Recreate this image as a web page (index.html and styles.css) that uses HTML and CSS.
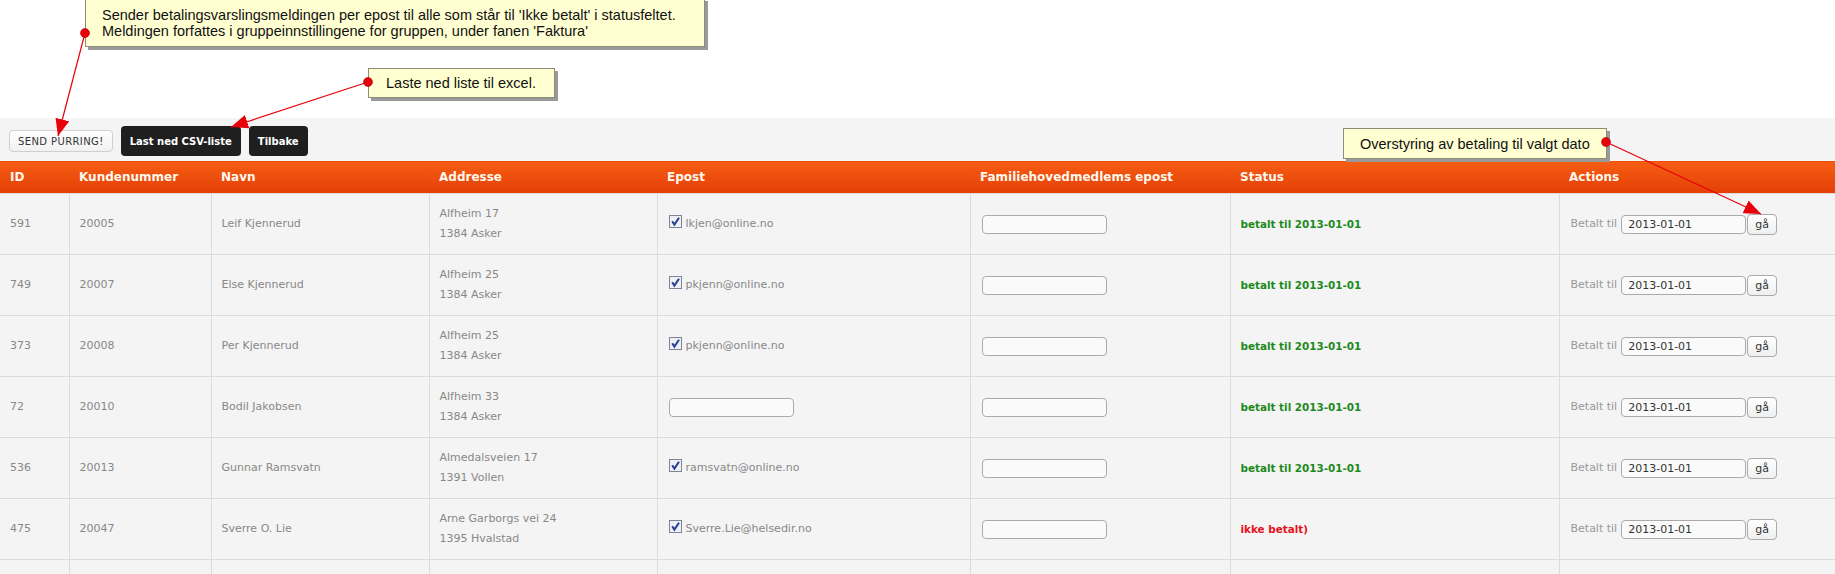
FILE: index.html
```html
<!DOCTYPE html>
<html lang="no">
<head>
    <meta charset="UTF-8">
    <title>Medlemmer - betaling</title>
    <link rel="stylesheet" href="styles.css">
</head>
<body>
    <div class="page">
        <div class="intro"></div>

        <div class="main">
            <div class="toolbar">
                <button class="btn-light">SEND PURRING!</button>
                <button class="btn-dark">Last ned CSV-liste</button>
                <button class="btn-dark">Tilbake</button>
            </div>

            <table class="members">
                <colgroup>
                    <col style="width:69px"><col style="width:142px"><col style="width:218px"><col style="width:228px">
                    <col style="width:313px"><col style="width:260px"><col style="width:329px"><col style="width:276px">
                </colgroup>
                <thead>
                    <tr>
                        <th>ID</th><th>Kundenummer</th><th>Navn</th><th>Addresse</th>
                        <th>Epost</th><th>Familiehovedmedlems epost</th><th>Status</th><th>Actions</th>
                    </tr>
                </thead>
                <tbody>
                    <tr>
                        <td>591</td><td>20005</td><td>Leif Kjennerud</td>
                        <td><div>Alfheim 17</div><div>1384 Asker</div></td>
                        <td><span class="chk"><svg width="13" height="13" viewBox="0 0 13 13"><rect x="0.5" y="0.5" width="12" height="12" fill="#eef0f5" stroke="#7c8597"/><path d="M3.2 6.2 L5.4 9.6 L10 2.8" fill="none" stroke="#2b3f8f" stroke-width="2"/></svg></span>lkjen@online.no</td>
                        <td><input class="field" type="text"></td>
                        <td class="paid">betalt til 2013-01-01</td>
                        <td><span class="lbl">Betalt til</span><input class="date" type="text" value="2013-01-01"><button class="go">gå</button></td>
                    </tr>
                    <tr>
                        <td>749</td><td>20007</td><td>Else Kjennerud</td>
                        <td><div>Alfheim 25</div><div>1384 Asker</div></td>
                        <td><span class="chk"><svg width="13" height="13" viewBox="0 0 13 13"><rect x="0.5" y="0.5" width="12" height="12" fill="#eef0f5" stroke="#7c8597"/><path d="M3.2 6.2 L5.4 9.6 L10 2.8" fill="none" stroke="#2b3f8f" stroke-width="2"/></svg></span>pkjenn@online.no</td>
                        <td><input class="field" type="text"></td>
                        <td class="paid">betalt til 2013-01-01</td>
                        <td><span class="lbl">Betalt til</span><input class="date" type="text" value="2013-01-01"><button class="go">gå</button></td>
                    </tr>
                    <tr>
                        <td>373</td><td>20008</td><td>Per Kjennerud</td>
                        <td><div>Alfheim 25</div><div>1384 Asker</div></td>
                        <td><span class="chk"><svg width="13" height="13" viewBox="0 0 13 13"><rect x="0.5" y="0.5" width="12" height="12" fill="#eef0f5" stroke="#7c8597"/><path d="M3.2 6.2 L5.4 9.6 L10 2.8" fill="none" stroke="#2b3f8f" stroke-width="2"/></svg></span>pkjenn@online.no</td>
                        <td><input class="field" type="text"></td>
                        <td class="paid">betalt til 2013-01-01</td>
                        <td><span class="lbl">Betalt til</span><input class="date" type="text" value="2013-01-01"><button class="go">gå</button></td>
                    </tr>
                    <tr>
                        <td>72</td><td>20010</td><td>Bodil Jakobsen</td>
                        <td><div>Alfheim 33</div><div>1384 Asker</div></td>
                        <td><input class="field" type="text"></td>
                        <td><input class="field" type="text"></td>
                        <td class="paid">betalt til 2013-01-01</td>
                        <td><span class="lbl">Betalt til</span><input class="date" type="text" value="2013-01-01"><button class="go">gå</button></td>
                    </tr>
                    <tr>
                        <td>536</td><td>20013</td><td>Gunnar Ramsvatn</td>
                        <td><div>Almedalsveien 17</div><div>1391 Vollen</div></td>
                        <td><span class="chk"><svg width="13" height="13" viewBox="0 0 13 13"><rect x="0.5" y="0.5" width="12" height="12" fill="#eef0f5" stroke="#7c8597"/><path d="M3.2 6.2 L5.4 9.6 L10 2.8" fill="none" stroke="#2b3f8f" stroke-width="2"/></svg></span>ramsvatn@online.no</td>
                        <td><input class="field" type="text"></td>
                        <td class="paid">betalt til 2013-01-01</td>
                        <td><span class="lbl">Betalt til</span><input class="date" type="text" value="2013-01-01"><button class="go">gå</button></td>
                    </tr>
                    <tr>
                        <td>475</td><td>20047</td><td>Sverre O. Lie</td>
                        <td><div>Arne Garborgs vei 24</div><div>1395 Hvalstad</div></td>
                        <td><span class="chk"><svg width="13" height="13" viewBox="0 0 13 13"><rect x="0.5" y="0.5" width="12" height="12" fill="#eef0f5" stroke="#7c8597"/><path d="M3.2 6.2 L5.4 9.6 L10 2.8" fill="none" stroke="#2b3f8f" stroke-width="2"/></svg></span>Sverre.Lie@helsedir.no</td>
                        <td><input class="field" type="text"></td>
                        <td class="unpaid">ikke betalt)</td>
                        <td><span class="lbl">Betalt til</span><input class="date" type="text" value="2013-01-01"><button class="go">gå</button></td>
                    </tr>
                    <tr>
                        <td></td><td></td><td></td><td></td><td></td><td></td><td></td><td></td>
                    </tr>
                </tbody>
            </table>
        </div>

        <!-- forklaringer lagt over siden -->
        <div class="note note-purring">Sender betalingsvarslingsmeldingen per epost til alle som står til 'Ikke betalt' i statusfeltet.<br>Meldingen forfattes i gruppeinnstillingene for gruppen, under fanen 'Faktura'</div>
        <div class="note note-csv">Laste ned liste til excel.</div>
        <div class="note note-override">Overstyring av betaling til valgt dato</div>

        <svg class="arrows" width="1835" height="574" viewBox="0 0 1835 574">
            <defs>
                <marker id="head" markerUnits="userSpaceOnUse" markerWidth="18" markerHeight="14" refX="17" refY="7" orient="auto">
                    <path d="M0 0 L17 7 L0 14 Z" fill="#e8000b"/>
                </marker>
            </defs>
            <line x1="85" y1="33" x2="58" y2="136" stroke="#e8000b" stroke-width="1.2" marker-end="url(#head)"/>
            <line x1="368" y1="82" x2="231" y2="127" stroke="#e8000b" stroke-width="1.2" marker-end="url(#head)"/>
            <line x1="1606" y1="142" x2="1761" y2="214" stroke="#e8000b" stroke-width="1.2" marker-end="url(#head)"/>
            <circle cx="85" cy="33" r="4.5" fill="#e8000b" stroke="#a00" stroke-width="0.6"/>
            <circle cx="368" cy="82" r="4.5" fill="#e8000b" stroke="#a00" stroke-width="0.6"/>
            <circle cx="1606" cy="142" r="4.5" fill="#e8000b" stroke="#a00" stroke-width="0.6"/>
        </svg>
    </div>
</body>
</html>
```

FILE: styles.css
```css
* {
    box-sizing: border-box;
}

body {
    margin: 0;
    background: #fff;
    font-family: 'DejaVu Sans', Verdana, sans-serif;
    font-size: 11px;
    color: #888;
}

.page {
    position: relative;
    width: 1835px;
    height: 574px;
    overflow: hidden;
}

.intro {
    height: 118px;
    background: #fff;
}

.main {
    background: #f4f4f4;
}

/* knapperad */
.toolbar {
    display: flex;
    align-items: center;
    gap: 8px;
    padding: 8px 9px 4px;
}

.toolbar button {
    font-family: 'DejaVu Sans', Verdana, sans-serif;
    cursor: pointer;
}

.btn-light {
    height: 22px;
    padding: 0 8px;
    font-size: 10px;
    letter-spacing: 0.4px;
    color: #333;
    background: linear-gradient(#fff, #f1f1f1);
    border: 1px solid #cfcfcf;
    border-radius: 4px;
}

.btn-dark {
    height: 30px;
    padding: 0 9px;
    font-size: 10px;
    font-weight: bold;
    color: #fff;
    background: #1f1f1f;
    border: none;
    border-radius: 4px;
}

/* tabellen */
.members {
    width: 100%;
    table-layout: fixed;
    border-collapse: collapse;
}

.members th {
    height: 33px;
    padding: 0 10px;
    text-align: left;
    font-size: 12px;
    font-weight: bold;
    color: #fff8ee;
    background: linear-gradient(#f65d12, #e33f07);
    border-top: 1px solid #f4f4f4;
}

.members td {
    height: 61px;
    padding: 0 10px;
    vertical-align: middle;
    white-space: nowrap;
    border: 1px solid #dcdcdc;
    line-height: 20px;
}

.members td:first-child {
    border-left: none;
}

.members td:last-child {
    border-right: none;
}

.chk {
    display: inline-block;
    width: 13px;
    height: 13px;
    margin: 0 4px 0 1px;
    vertical-align: -1px;
}

.chk svg {
    display: block;
}

.field,
.date {
    width: 125px;
    height: 19px;
    padding: 0 6px;
    border: 1px solid #aaa;
    border-radius: 4px;
    background: #fafafa;
    font-family: 'DejaVu Sans', Verdana, sans-serif;
    font-size: 11px;
    color: #333;
    vertical-align: middle;
}

.field {
    margin-left: 1px;
}

.paid,
.unpaid {
    font-size: 10.4px;
    font-weight: bold;
}

.paid {
    color: #1c8a1c;
}

.unpaid {
    color: #e8101c;
}

.lbl {
    color: #999;
    margin: 0 4px 0 1px;
    vertical-align: middle;
}

.go {
    width: 30px;
    height: 21px;
    margin-left: 1px;
    padding: 0;
    font-family: 'DejaVu Sans', Verdana, sans-serif;
    font-size: 11px;
    color: #333;
    background: linear-gradient(#fff, #efefef);
    border: 1px solid #aaa;
    border-radius: 4px;
    vertical-align: middle;
}

/* forklaringsbokser */
.note {
    position: absolute;
    font-family: 'Liberation Sans', Arial, sans-serif;
    font-size: 14.5px;
    line-height: 16px;
    color: #111;
    background: #ffffd2;
    border: 1px solid #8d8d7a;
    box-shadow: 3px 3px 0 #9a9a9a;
    white-space: nowrap;
}

.note-purring {
    left: 85px;
    top: -2px;
    width: 620px;
    height: 49px;
    padding: 8px 0 0 16px;
}

.note-csv {
    left: 368px;
    top: 68px;
    width: 187px;
    height: 30px;
    padding: 6px 0 0 17px;
}

.note-override {
    left: 1343px;
    top: 128px;
    width: 264px;
    height: 31px;
    padding: 7px 0 0 16px;
}

.arrows {
    position: absolute;
    left: 0;
    top: 0;
    pointer-events: none;
}
```
